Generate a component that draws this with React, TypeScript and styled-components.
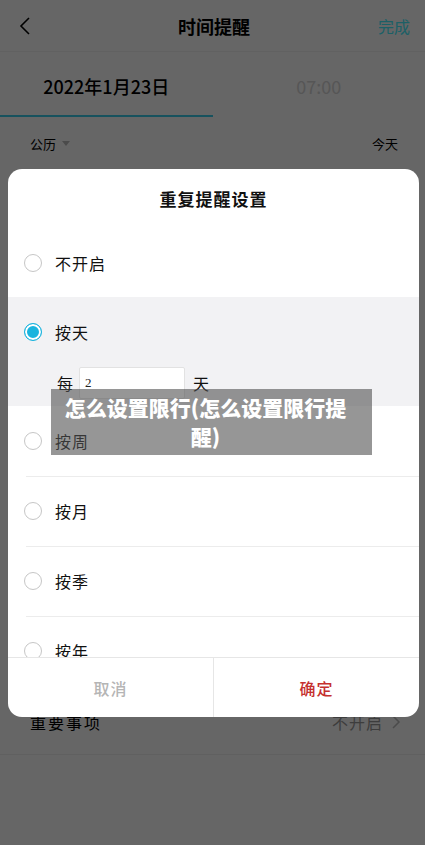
import React from "react";
import styled, { createGlobalStyle } from "styled-components";

const GlobalStyle = createGlobalStyle`
  html, body { margin: 0; padding: 0; }
  body {
    font-family: "Noto Sans CJK SC", "Noto Sans", "Liberation Sans", sans-serif;
    background: #ffffff;
  }
  * { box-sizing: border-box; }
`;

const Page = styled.div`
  position: relative;
  width: 425px;
  height: 845px;
  overflow: hidden;
  background: #ffffff;
  display: flex;
  flex-direction: column;
`;

const Header = styled.header`
  height: 52px;
  display: grid;
  grid-template-columns: 1fr auto 1fr;
  align-items: center;
  padding: 0 15px 0 18px;
  border-bottom: 1px solid #f2f2f2;
`;

const BackButton = styled.div`
  display: flex;
  align-items: center;
  justify-self: start;
`;

const Title = styled.h1`
  margin: 0;
  font-size: 18px;
  font-weight: 700;
  color: #000;
`;

const Done = styled.span`
  justify-self: end;
  font-size: 16px;
  color: #48f0ff;
`;

const Tabs = styled.div`
  height: 65px;
  display: flex;
`;

const Tab = styled.div<{ $active?: boolean }>`
  flex: 1;
  display: flex;
  align-items: center;
  justify-content: center;
  padding-top: 5px;
  font-size: 18px;
  font-weight: ${(p) => (p.$active ? 500 : 400)};
  color: ${(p) => (p.$active ? "#000" : "#d6d6d6")};
  border-bottom: 2px solid ${(p) => (p.$active ? "#3bcdec" : "transparent")};
`;

const SubRow = styled.div`
  height: 53px;
  display: flex;
  align-items: center;
  justify-content: space-between;
  padding: 0 27px 0 30px;
  font-size: 13px;
  color: #000;
`;

const Calendar = styled.span`
  display: flex;
  align-items: center;
  gap: 6px;
`;

const Caret = styled.span`
  width: 0;
  height: 0;
  border-left: 4px solid transparent;
  border-right: 4px solid transparent;
  border-top: 5px solid #bbb;
`;

const Filler = styled.div`
  flex: 1;
`;

const ImportantRow = styled.div`
  height: 66px;
  display: flex;
  align-items: center;
  justify-content: space-between;
  padding: 0 24px 0 30px;
  border-bottom: 1px solid #f0f0f0;
  font-size: 16px;
`;

const ImportantLabel = styled.span`
  letter-spacing: 2px;
  color: #000;
`;

const ImportantValue = styled.span`
  display: flex;
  align-items: center;
  gap: 8px;
  color: #999;
  letter-spacing: 1px;
`;

const BottomSpace = styled.div`
  height: 90px;
`;

const Overlay = styled.div`
  position: absolute;
  inset: 0;
  background: rgba(0, 0, 0, 0.6);
  display: flex;
  justify-content: center;
  align-items: flex-start;
  padding-top: 169px;
`;

const Modal = styled.div`
  width: 411px;
  height: 548px;
  margin-left: 2px;
  background: #fff;
  border-radius: 14px;
  overflow: hidden;
  display: flex;
  flex-direction: column;
`;

const ModalTitle = styled.div`
  height: 59px;
  display: flex;
  align-items: center;
  justify-content: center;
  font-size: 17px;
  font-weight: 700;
  color: #111;
  letter-spacing: 1px;
`;

const List = styled.div`
  flex: 1;
  overflow: hidden;
`;

const Option = styled.div<{ $selected?: boolean; $divider?: boolean }>`
  position: relative;
  background: ${(p) => (p.$selected ? "#f2f2f4" : "#fff")};
  padding-bottom: ${(p) => (p.$selected ? "7px" : "0")};
  &::before {
    content: "";
    display: ${(p) => (p.$divider ? "block" : "none")};
    position: absolute;
    top: 0;
    left: 18px;
    right: 0;
    height: 1px;
    background: #ececec;
  }
`;

const OptionHead = styled.div<{ $short?: boolean }>`
  height: ${(p) => (p.$short ? "69px" : "70px")};
  display: flex;
  align-items: center;
  gap: 13px;
  padding-left: 16px;
  font-size: 16px;
  color: #111;
  letter-spacing: 1px;
`;

const Radio = styled.span<{ $checked?: boolean }>`
  width: 18px;
  height: 18px;
  border-radius: 50%;
  flex-shrink: 0;
  border: 1.5px solid ${(p) => (p.$checked ? "#19b4de" : "#c6c6c6")};
  background: ${(p) => (p.$checked ? "#19b4de" : "#fff")};
  box-shadow: ${(p) => (p.$checked ? "inset 0 0 0 2px #fff" : "none")};
`;

const EveryRow = styled.div`
  height: 32px;
  display: flex;
  align-items: center;
  padding-left: 49px;
  font-size: 16px;
  color: #111;
`;

const NumberInput = styled.input`
  width: 106px;
  height: 32px;
  margin: 0 8px 0 6px;
  padding: 0 5px;
  border: 1px solid #e2e2e2;
  border-radius: 2px;
  background: #fff;
  font-family: "Liberation Serif", serif;
  font-size: 13px;
  color: #222;
  outline: none;
`;

const Footer = styled.div`
  height: 60px;
  border-top: 1px solid #e6e6e6;
  display: flex;
`;

const FooterButton = styled.div<{ $primary?: boolean }>`
  flex: 1;
  display: flex;
  align-items: center;
  justify-content: center;
  font-size: 16px;
  font-weight: 500;
  letter-spacing: 1px;
  color: ${(p) => (p.$primary ? "#c5302e" : "#b5b5b5")};
  & + & {
    border-left: 1px solid #e6e6e6;
  }
`;

const Watermark = styled.div`
  position: absolute;
  left: 51px;
  top: 389px;
  width: 321px;
  height: 66px;
  padding: 4px 16px 0 4px;
  background: rgba(80, 80, 80, 0.6);
  color: #fff;
  font-size: 21px;
  font-weight: 900;
  line-height: 29px;
  text-align: center;
`;

const options = [
  { label: "不开启" },
  { label: "按天", selected: true },
  { label: "按周" },
  { label: "按月" },
  { label: "按季" },
  { label: "按年" },
];

export default function App() {
  return (
    <>
      <GlobalStyle />
      <Page>
        <Header>
          <BackButton>
            <svg width="14" height="20" viewBox="0 0 14 20" fill="none">
              <polyline points="11,2 3,10 11,18" stroke="#000" strokeWidth="1.6" fill="none" />
            </svg>
          </BackButton>
          <Title>时间提醒</Title>
          <Done>完成</Done>
        </Header>
        <Tabs>
          <Tab $active>2022年1月23日</Tab>
          <Tab>07:00</Tab>
        </Tabs>
        <SubRow>
          <Calendar>
            公历 <Caret />
          </Calendar>
          <span>今天</span>
        </SubRow>
        <Filler />
        <ImportantRow>
          <ImportantLabel>重要事项</ImportantLabel>
          <ImportantValue>
            不开启
            <svg width="10" height="16" viewBox="0 0 10 16" fill="none">
              <polyline points="2,2 8,8 2,14" stroke="#bbb" strokeWidth="1.5" fill="none" />
            </svg>
          </ImportantValue>
        </ImportantRow>
        <BottomSpace />

        <Overlay>
          <Modal>
            <ModalTitle>重复提醒设置</ModalTitle>
            <List>
              {options.map((o, i) => (
                <Option key={o.label} $selected={o.selected} $divider={i >= 3}>
                  <OptionHead $short={i === 0}>
                    <Radio $checked={o.selected} />
                    {o.label}
                  </OptionHead>
                  {o.selected && (
                    <EveryRow>
                      每
                      <NumberInput readOnly value="2" />
                      天
                    </EveryRow>
                  )}
                </Option>
              ))}
            </List>
            <Footer>
              <FooterButton>取消</FooterButton>
              <FooterButton $primary>确定</FooterButton>
            </Footer>
          </Modal>
        </Overlay>

        <Watermark>怎么设置限行(怎么设置限行提醒)</Watermark>
      </Page>
    </>
  );
}
